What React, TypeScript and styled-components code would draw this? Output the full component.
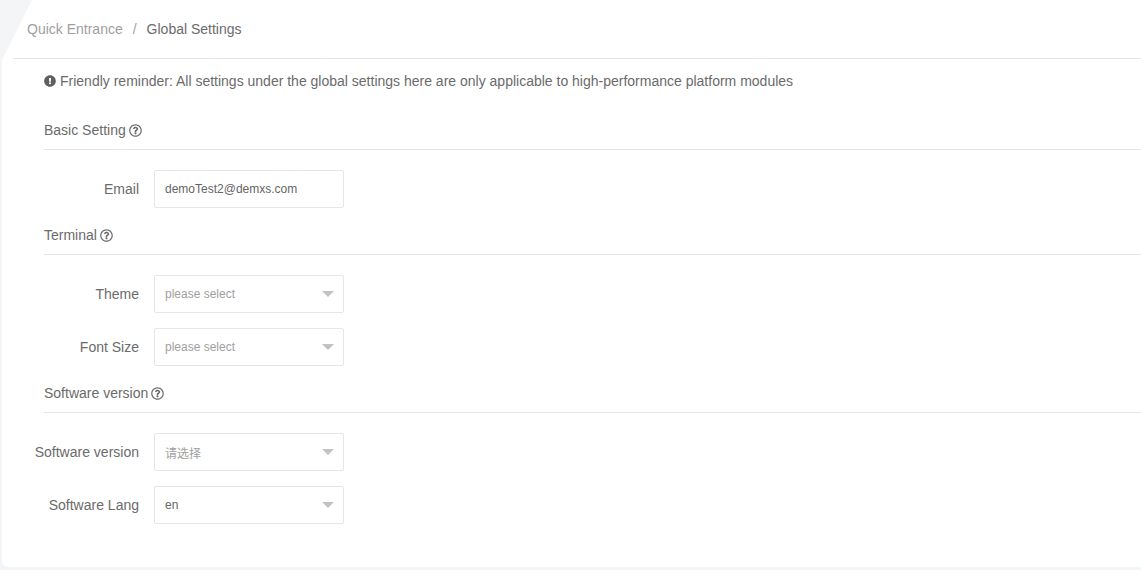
import styled, { createGlobalStyle } from "styled-components";
import { FaExclamationCircle, FaRegQuestionCircle } from "react-icons/fa";

const GlobalStyle = createGlobalStyle`
  html, body {
    margin: 0;
    padding: 0;
    height: 100%;
    overflow: hidden;
    background-color: #f3f5f7;
    font-family: "Liberation Sans", Arial, "Noto Sans CJK SC", sans-serif;
    color: #6b6b6b;
  }
`;

const Page = styled.div`
  position: relative;
  height: 570px;
  padding-left: 2px;
  box-sizing: border-box;
`;

const Corner = styled.div`
  position: absolute;
  top: 0;
  left: 0;
  width: 32px;
  height: 60px;
  background-color: #f3f5f7;
  clip-path: polygon(0 0, 100% 0, 6.5% 100%, 0 100%);
`;

const Card = styled.div`
  height: 567px;
  background-color: #fff;
  border-bottom-left-radius: 6px;
`;

const Breadcrumb = styled.nav`
  position: relative;
  display: flex;
  align-items: center;
  height: 58px;
  margin-left: 11px;
  padding-left: 14px;
  border-bottom: 1px solid #e6e6e6;
  font-size: 14px;
  box-sizing: content-box;
`;

const Crumb = styled.span<{ $active?: boolean }>`
  color: ${(props) => (props.$active ? "#6b6b6b" : "#a0a0a0")};
`;

const Separator = styled.span`
  color: #a0a0a0;
  margin: 0 10px;
`;

const Content = styled.div`
  padding-left: 42px;
`;

const Reminder = styled.div`
  display: flex;
  align-items: center;
  gap: 4px;
  height: 44px;
  margin-bottom: 8px;
  font-size: 14px;
  svg {
    width: 12px;
    height: 12px;
    color: #5f5f5f;
  }
`;

const SectionTitle = styled.div`
  display: flex;
  align-items: center;
  gap: 3px;
  height: 38px;
  border-bottom: 1px solid #e6e6e6;
  font-size: 14px;
  svg {
    width: 13px;
    height: 13px;
    color: #6b6b6b;
  }
`;

const Form = styled.div`
  display: flex;
  flex-direction: column;
  gap: 15px;
  margin: 20px 0 8px -42px;
`;

const Row = styled.div`
  display: flex;
  align-items: center;
  gap: 15px;
`;

const Label = styled.label`
  width: 137px;
  text-align: right;
  font-size: 14px;
`;

const Field = styled.div<{ $placeholder?: boolean }>`
  position: relative;
  width: 190px;
  height: 38px;
  box-sizing: border-box;
  display: flex;
  align-items: center;
  padding-left: 10px;
  background-color: #fff;
  border: 1px solid #e6e6e6;
  border-radius: 2px;
  font-size: 12px;
  color: ${(props) => (props.$placeholder ? "#a0a0a0" : "#666")};
`;

const Caret = styled.i`
  position: absolute;
  top: 15px;
  right: 9px;
  width: 0;
  height: 0;
  border-style: solid;
  border-width: 6px 6px 0;
  border-color: #c2c2c2 transparent transparent;
`;

const settings = [
  {
    title: "Basic Setting",
    rows: [{ label: "Email", value: "demoTest2@demxs.com", select: false, placeholder: false }],
  },
  {
    title: "Terminal",
    rows: [
      { label: "Theme", value: "please select", select: true, placeholder: true },
      { label: "Font Size", value: "please select", select: true, placeholder: true },
    ],
  },
  {
    title: "Software version",
    rows: [
      { label: "Software version", value: "请选择", select: true, placeholder: true },
      { label: "Software Lang", value: "en", select: true, placeholder: false },
    ],
  },
];

export default function App() {
  return (
    <Page>
      <GlobalStyle />
      <Card>
        <Breadcrumb>
          <Crumb>Quick Entrance</Crumb>
          <Separator>/</Separator>
          <Crumb $active>Global Settings</Crumb>
        </Breadcrumb>
        <Content>
          <Reminder>
            <FaExclamationCircle />
            Friendly reminder: All settings under the global settings here are only applicable to
            high-performance platform modules
          </Reminder>
          {settings.map((section) => (
            <section key={section.title}>
              <SectionTitle>
                {section.title}
                <FaRegQuestionCircle />
              </SectionTitle>
              <Form>
                {section.rows.map((row) => (
                  <Row key={row.label}>
                    <Label>{row.label}</Label>
                    <Field $placeholder={row.placeholder}>
                      {row.value}
                      {row.select ? <Caret /> : null}
                    </Field>
                  </Row>
                ))}
              </Form>
            </section>
          ))}
        </Content>
      </Card>
      <Corner />
    </Page>
  );
}
